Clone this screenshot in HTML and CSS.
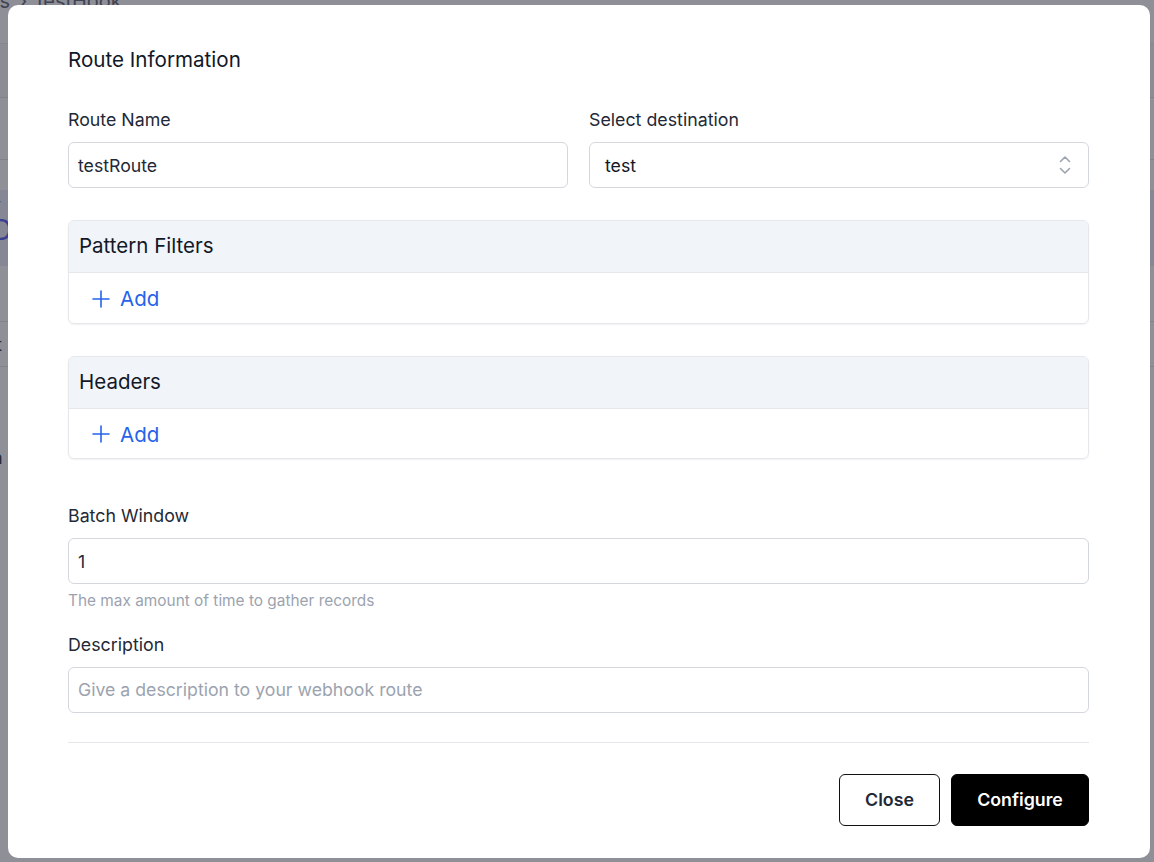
FILE: index.html
```html
<!DOCTYPE html>
<html lang="en">
<head>
<meta charset="utf-8">
<title>Route Information</title>
<link rel="stylesheet" href="styles.css">
</head>
<body>
<div class="page">
  <div class="crumbs">Webhooks <span class="sep">›</span> testHook</div>
  <div class="page-head"></div>
  <div class="page-row"></div>
  <div class="page-tabs"><span class="tab-small">T</span><span class="tab-big">D</span></div>
  <div class="page-row2"><span>t</span></div>
  <div class="page-note">n</div>
</div>

<div class="overlay">
  <div class="modal">
    <h2 class="title">Route Information</h2>

    <div class="grid2">
      <div class="field">
        <label class="label">Route Name</label>
        <div class="input">testRoute</div>
      </div>
      <div class="field">
        <label class="label">Select destination</label>
        <div class="input select">
          <span>test</span>
          <svg class="chev" width="12" height="20" viewBox="0 0 12 20" fill="none" stroke="#9ca3af" stroke-width="1.6" stroke-linecap="round" stroke-linejoin="round"><path d="M1.5 6.5 L6 2 L10.5 6.5"/><path d="M1.5 13.5 L6 18 L10.5 13.5"/></svg>
        </div>
      </div>
    </div>

    <div class="card">
      <div class="card-head">Pattern Filters</div>
      <div class="card-body">
        <span class="add"><svg width="18" height="18" viewBox="0 0 18 18" fill="none" stroke="#2563eb" stroke-width="1.6" stroke-linecap="round"><path d="M9 1 V17 M1 9 H17"/></svg>Add</span>
      </div>
    </div>

    <div class="card">
      <div class="card-head">Headers</div>
      <div class="card-body">
        <span class="add"><svg width="18" height="18" viewBox="0 0 18 18" fill="none" stroke="#2563eb" stroke-width="1.6" stroke-linecap="round"><path d="M9 1 V17 M1 9 H17"/></svg>Add</span>
      </div>
    </div>

    <div class="field batch">
      <label class="label">Batch Window</label>
      <div class="input">1</div>
      <div class="help">The max amount of time to gather records</div>
    </div>

    <div class="field desc">
      <label class="label">Description</label>
      <div class="input placeholder">Give a description to your webhook route</div>
    </div>

    <div class="divider"></div>

    <div class="actions">
      <button class="btn btn-outline">Close</button>
      <button class="btn btn-solid">Configure</button>
    </div>
  </div>
</div>
</body>
</html>
```

FILE: styles.css
```css
* { box-sizing: border-box; }
html, body { margin: 0; padding: 0; }
body {
  font-family: Inter, "Noto Sans", "Liberation Sans", sans-serif;
  background: #ffffff;
  color: #111827;
  width: 1154px;
  height: 862px;
  overflow: hidden;
}

/* background page */
.page { width: 1154px; height: 862px; }
.crumbs {
  font-size: 20px;
  color: #6b7280;
  margin-top: -11px;
  margin-left: -90px;
  height: 30px;
}
.crumbs .sep { margin: 0 4px; }
.page-head {
  margin-top: 24px;
  height: 55px;
  background: #f9fafb;
  border-top: 1px solid #eceef2;
  border-bottom: 1px solid #e5e7eb;
}
.page-row { height: 62px; border-bottom: 1px solid #e5e7eb; }
.page-tabs {
  margin-top: 30px;
  height: 76px;
  background: #eef0fb;
  display: flex;
  flex-direction: column;
  margin-left: -8px;
  color: #6366f1;
}
.tab-small { font-size: 14px; margin-top: 8px; color: #6b7280; }
.tab-big { font-size: 28px; line-height: 30px; }
.page-row2 {
  margin-top: 55px;
  height: 46px;
  border-top: 1px solid #e5e7eb;
  border-bottom: 1px solid #e5e7eb;
  margin-left: -4px;
  font-size: 18px;
  color: #374151;
  display: flex;
  align-items: center;
}
.page-note { margin-top: 80px; margin-left: -8px; font-size: 18px; color: #374151; }

/* overlay + modal */
.overlay {
  position: fixed;
  inset: 0;
  background: rgba(17, 17, 34, 0.47);
  display: flex;
  align-items: flex-start;
  padding: 5px 4px 4px 8px;
}
.modal {
  width: 1142px;
  height: 853px;
  background: #ffffff;
  border-radius: 10px;
  padding: 41px 61px 32px 60px;
  display: flex;
  flex-direction: column;
}
.title {
  margin: 0;
  font-size: 20.6px;
  font-weight: 400;
  line-height: 28px;
  color: #111827;
}

.grid2 {
  margin-top: 34px;
  display: grid;
  grid-template-columns: 1fr 1fr;
  column-gap: 21px;
}
.field { display: flex; flex-direction: column; }
.label {
  font-size: 17.8px;
  line-height: 24px;
  font-weight: 400;
  color: #1f2937;
  margin-bottom: 10px;
}
.input {
  height: 46px;
  border: 1px solid #d5d7de;
  border-radius: 6px;
  padding: 0 10px 0 9px;
  font-size: 17.7px;
  color: #1f2937;
  display: flex;
  align-items: center;
}
.input.placeholder { color: #9ca3af; padding-bottom: 1px; }
.select {
  justify-content: space-between;
  padding: 0 17px 0 15px;
  color: #111827;
}
.chev { display: block; }

.card {
  margin-top: 32px;
  border: 1px solid #e5e7eb;
  border-radius: 6px;
  overflow: hidden;
  box-shadow: 0 1px 2px rgba(0, 0, 0, 0.06);
}
.card-head {
  height: 52px;
  background: #f1f4f8;
  border-bottom: 1px solid #e5e7eb;
  padding: 0 0 2px 10px;
  display: flex;
  align-items: center;
  font-size: 20.5px;
  color: #111827;
}
.card-body {
  height: 51px;
  padding-left: 23px;
  display: flex;
  align-items: center;
}
.add {
  display: inline-flex;
  align-items: center;
  gap: 10px;
  color: #2563eb;
  font-size: 20.5px;
}
.add svg { display: block; }

.batch { margin-top: 45px; }
.help {
  margin-top: 7px;
  font-size: 15.4px;
  line-height: 20px;
  color: #9ca3af;
}
.desc { margin-top: 22px; }

.divider {
  margin-top: 29px;
  height: 1px;
  background: #e5e7eb;
}

.actions {
  margin-top: 31px;
  display: flex;
  justify-content: flex-end;
  gap: 11px;
}
.btn {
  height: 52px;
  border-radius: 6px;
  font-family: Inter, "Liberation Sans", sans-serif;
  font-size: 17.8px;
  font-weight: 600;
  cursor: pointer;
}
.btn-outline {
  width: 101px;
  background: #ffffff;
  border: 1px solid #111111;
  color: #1f2937;
}
.btn-solid {
  width: 138px;
  background: #000000;
  border: 1px solid #000000;
  color: #ffffff;
}
```
